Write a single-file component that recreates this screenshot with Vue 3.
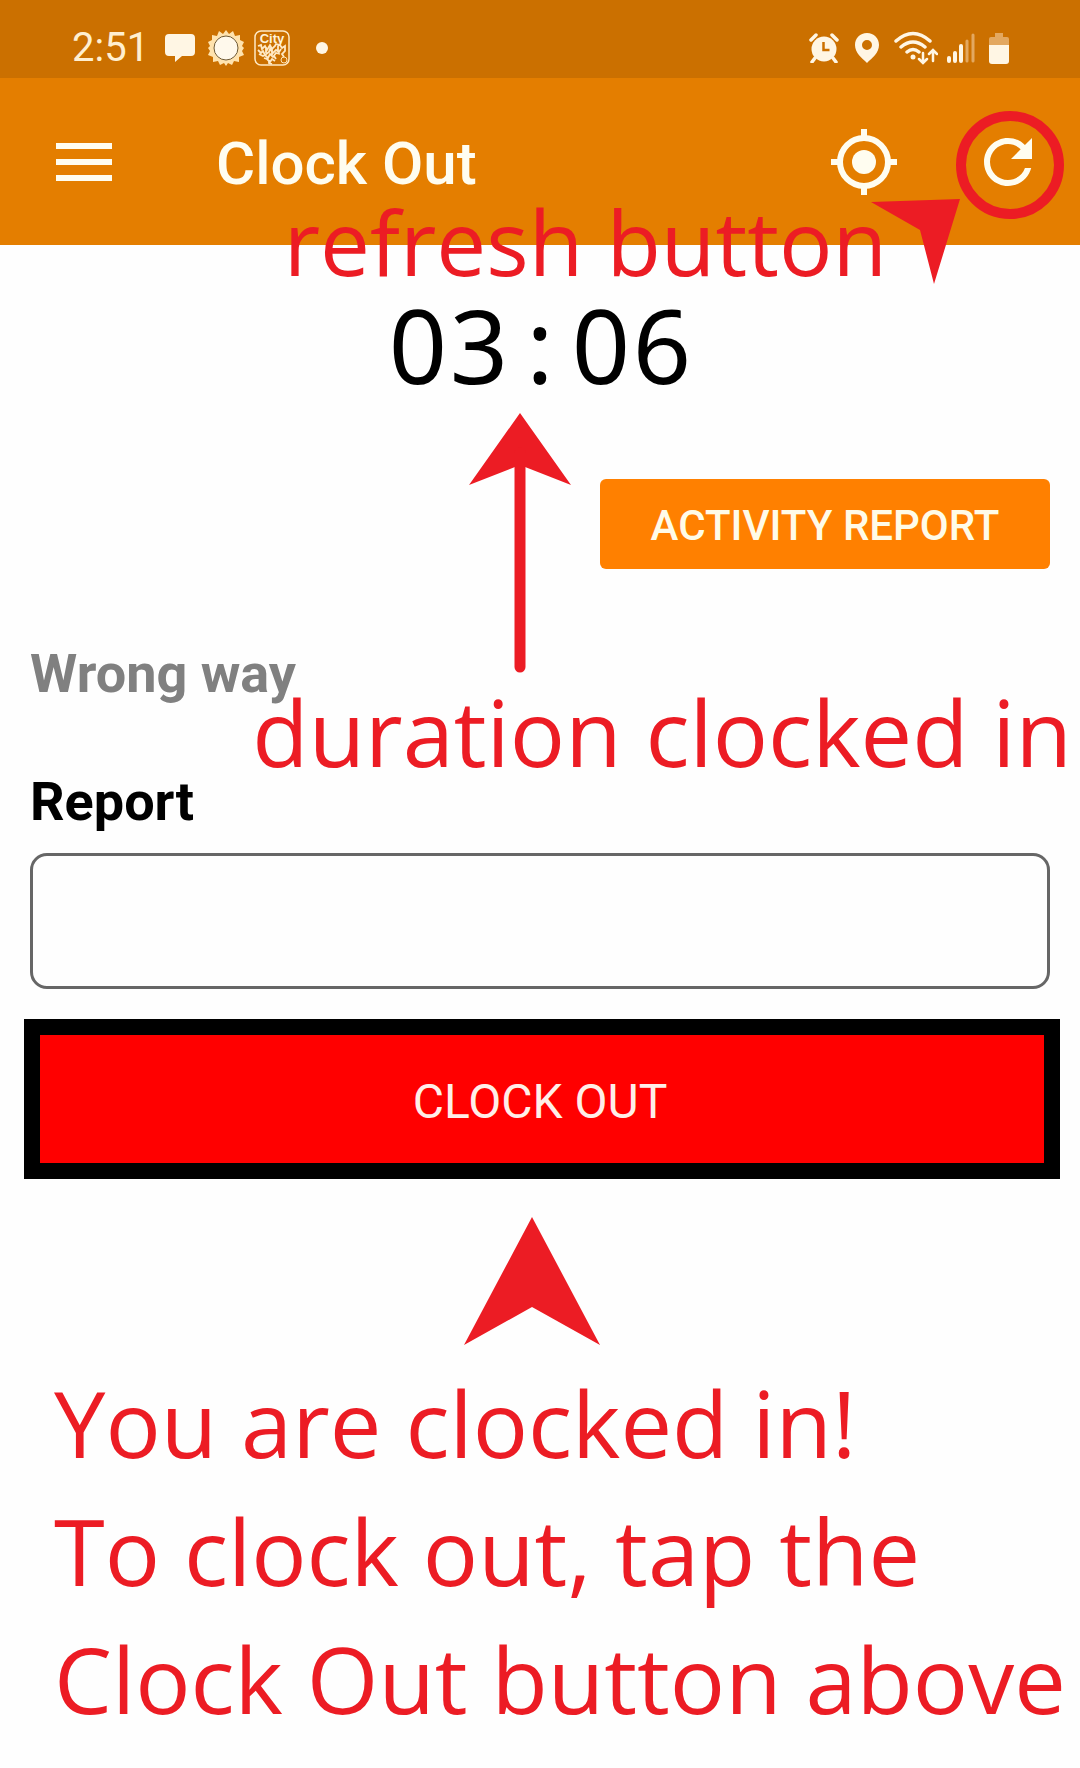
<script setup>
import { ref } from 'vue'

const report = ref('')
const elapsed = ref('03:06')
const instructions = [
  'You are clocked in!',
  'To clock out, tap the',
  'Clock Out button above',
]
</script>

<template>
  <div class="screen">
    <div class="status-bar">
      <div class="status-group">
        <span class="time">2:51</span>
        <svg width="30" height="30" viewBox="0 0 30 30">
          <path d="M4 1h22a4 4 0 0 1 4 4v14a4 4 0 0 1-4 4h-9l-7 6v-6H4a4 4 0 0 1-4-4V5a4 4 0 0 1 4-4z" fill="currentColor" />
        </svg>
        <svg class="sun" width="36" height="36" viewBox="0 0 36 36">
          <path d="M18 0l3 4 4-3 2 5 5-1v5l4 2-2 4 2 2-2 3 2 4-5 2v5l-5-1-2 4-4-2-2 3-2-3-4 2-2-4-5 1v-5l-5-2 2-4-2-3 2-2-2-4 4-2V5l5 1 2-5 4 3z" fill="#ffe3ae" />
          <circle cx="18" cy="18" r="12" fill="#fff9ec" stroke="#6f5a35" stroke-width="1" />
        </svg>
        <svg class="city" width="36" height="36" viewBox="0 0 36 36">
          <rect x="1" y="1" width="34" height="34" rx="6" fill="none" stroke="#ffe9c4" stroke-width="1.5" />
          <text x="18" y="13" text-anchor="middle" class="city-label">City</text>
          <path d="M4 16l3-1 1 4 3-3 2 4 3-5 2 4 3-3 1-2 4 1 2 3 3-2v5l-3 3 2 3M4 20l3 3 2-2 2 4 4-3 1-3 3 4 3-3 3 2 2-3M5 24l4 2 2-1 3 3 2-4 3 3 3-4 4 1M10 28l3 1 3 3 2-3 3 2M15 30v3l3 1M20 26l2 3M12 17v6M24 16v6M18 18v7" fill="none" stroke="#ffe9c4" stroke-width="1.8" />
          <circle cx="30" cy="30" r="3" fill="none" stroke="#ffe3b4" stroke-width="1" />
        </svg>
        <svg width="12" height="12" viewBox="0 0 12 12"><circle cx="6" cy="6" r="6" fill="currentColor" /></svg>
      </div>
      <div class="status-group">
        <svg width="30" height="30" viewBox="0 0 30 30">
          <circle cx="15" cy="16" r="12.5" fill="currentColor" />
          <path d="M2 7l5-5M28 7l-5-5M6 25l-3 4M24 25l3 4" stroke="currentColor" stroke-width="3.5" stroke-linecap="round" />
          <path d="M14.5 9v8h6" fill="none" stroke="#cb7000" stroke-width="2.5" />
        </svg>
        <svg class="pin" width="26" height="32" viewBox="0 0 26 32">
          <path fill-rule="evenodd" d="M13 1C6 1 1 6 1 13c0 8 7 13 12 18 5-5 12-10 12-18C25 6 20 1 13 1zm0 7a5 5 0 1 1 0 10 5 5 0 0 1 0-10z" fill="currentColor" />
        </svg>
        <svg class="wifi" width="44" height="34" viewBox="0 0 44 34">
          <g fill="none" stroke="currentColor" stroke-width="3.5" stroke-linecap="round">
            <path d="M2 10q17-15 34 0M7 16q12-10 24 0M13 21q6-5 12 0" />
            <path d="M29 22v9M25 28l4 4 4-4M39 30v-10M35 23l4-4 4 4" stroke-width="2.5" />
          </g>
          <circle cx="19" cy="26" r="2.5" fill="currentColor" />
        </svg>
        <svg class="signal" width="28" height="30" viewBox="0 0 28 30">
          <path d="M2 25v3M8 20v8M14 13v15" stroke="currentColor" stroke-width="4" stroke-linecap="round" />
          <path d="M20 8v20M26 2v26" stroke="#e3a860" stroke-width="3" stroke-linecap="round" />
        </svg>
        <svg class="battery" width="22" height="32" viewBox="0 0 22 32">
          <path d="M7 1h8v4h4a2 2 0 0 1 2 2v8H1V7a2 2 0 0 1 2-2h4z" fill="#e3a860" />
          <path d="M1 13h20v16a3 3 0 0 1-3 3H4a3 3 0 0 1-3-3z" fill="currentColor" />
        </svg>
      </div>
    </div>

    <header class="app-bar">
      <button class="icon-button" type="button" aria-label="Menu">
        <svg width="56" height="38" viewBox="0 0 56 38"><path d="M0 3h56M0 19h56M0 35h56" stroke="currentColor" stroke-width="6" /></svg>
      </button>
      <h1>Clock Out</h1>
      <button class="icon-button" type="button" aria-label="Locate">
        <svg width="72" height="72" viewBox="0 0 72 72">
          <circle cx="36" cy="36" r="12" fill="currentColor" />
          <circle cx="36" cy="36" r="24" fill="none" stroke="currentColor" stroke-width="6" />
          <path d="M36 3v8M36 61v8M3 36h8M61 36h8" stroke="currentColor" stroke-width="6" />
        </svg>
      </button>
      <button class="icon-button refresh" type="button" aria-label="Refresh">
        <svg width="72" height="72" viewBox="0 0 24 24">
          <path fill="currentColor" d="M17.65 6.35C16.2 4.9 14.21 4 12 4c-4.42 0-7.99 3.58-7.99 8s3.57 8 7.99 8c3.73 0 6.84-2.55 7.73-6h-2.08c-.82 2.33-3.04 4-5.65 4-3.31 0-6-2.69-6-6s2.690-6 6-6c1.66 0 3.14.69 4.22 1.78L13 11h7V4l-2.35 2.35z" />
        </svg>
      </button>
      <svg class="refresh-mark" width="194" height="176" viewBox="0 0 194 176">
        <circle cx="140" cy="54" r="49" fill="none" stroke="currentColor" stroke-width="10" />
        <path d="M1 91l89-3-26 85-14-54z" fill="currentColor" />
      </svg>
      <p class="note refresh-note">refresh button</p>
    </header>

    <main>
      <section class="timer">
        <div class="digits" role="timer">
          <span v-for="(char, i) in elapsed" :key="i">{{ char }}</span>
        </div>
        <svg class="timer-arrow" width="104" height="260" viewBox="0 0 104 260">
          <path d="M52 0l51 72-51-20-51 20z" fill="currentColor" />
          <path d="M52 40v214" stroke="currentColor" stroke-width="11" stroke-linecap="round" />
        </svg>
      </section>

      <div class="actions">
        <button class="activity" type="button">ACTIVITY REPORT</button>
      </div>

      <div class="task">
        <h2>Wrong way</h2>
        <p class="note duration-note">duration clocked in</p>
      </div>

      <label for="report">Report</label>
      <input id="report" v-model="report" type="text" />
      <button class="clock-out" type="button">CLOCK OUT</button>

      <svg class="pointer" width="136" height="128" viewBox="0 0 136 128">
        <path d="M68 0l68 128-68-38-68 38z" fill="currentColor" />
      </svg>
      <div class="instructions">
        <p v-for="line in instructions" :key="line">{{ line }}</p>
      </div>
    </main>
  </div>
</template>

<style>
body {
  margin: 0;
  background: #fefefe;
}
</style>

<style scoped>
.screen {
  min-height: 100vh;
  overflow: hidden;
  background: #fefefe;
  color: #000;
  font-family: Roboto, "Liberation Sans", sans-serif;
}

h1, h2, p {
  margin: 0;
}

svg {
  display: block;
  flex: none;
}

button {
  border: 0;
  padding: 0;
  font-family: inherit;
  cursor: pointer;
}

.status-bar {
  display: flex;
  justify-content: space-between;
  height: 78px;
  padding: 16px 70px 0 72px;
  box-sizing: border-box;
  background: #cb7000;
  color: #fff6e4;
}

.status-group {
  display: flex;
  align-items: center;
  height: 64px;
}

.time {
  width: 93px;
  font-size: 40px;
  line-height: 48px;
  color: #ffefd0;
}

.sun { margin-left: 13px; }
.city { margin: 0 26px 0 10px; }

.city-label {
  font: bold 13px "Liberation Sans", sans-serif;
  fill: #fff3da;
}

.pin { margin-left: 15px; }
.wifi { margin-left: 14px; }
.signal { margin-left: 9px; }
.battery { margin-left: 13px; }

.app-bar {
  position: relative;
  display: flex;
  align-items: center;
  height: 167px;
  padding: 0 36px 0 56px;
  box-sizing: border-box;
  background: #e47e00;
  color: #fffdf0;
}

.icon-button {
  display: flex;
  background: none;
  color: inherit;
}

.refresh {
  margin-left: 72px;
}

h1 {
  flex: 1;
  margin-left: 104px;
  padding-top: 4px;
  font-size: 60px;
  line-height: 72px;
  font-weight: 500;
}

.refresh-mark {
  position: absolute;
  top: 33px;
  right: 16px;
  color: #ec1c24;
  pointer-events: none;
}

.note,
.instructions {
  color: #ec1c24;
  font-family: "Open Sans", "Noto Sans", sans-serif;
  font-size: 92px;
  white-space: nowrap;
}

.note {
  position: absolute;
  line-height: 96px;
}

.refresh-note {
  top: 116px;
  right: 193px;
  font-size: 89px;
}

main {
  display: flex;
  flex-direction: column;
  padding: 0 30px;
}

.timer {
  position: relative;
  display: flex;
  justify-content: center;
  padding-top: 40px;
}

.digits {
  display: grid;
  grid-template-columns: repeat(5, 61px);
  font-family: "Noto Sans", "Open Sans", sans-serif;
  font-size: 102px;
  line-height: 120px;
  text-align: center;
}

.timer-arrow {
  position: absolute;
  top: 168px;
  left: calc(50% - 72px);
  color: #ec1c24;
}

.actions {
  display: flex;
  justify-content: flex-end;
  margin-top: 74px;
}

.activity {
  width: 450px;
  height: 90px;
  padding-top: 2px;
  border-radius: 6px;
  background: #ff8000;
  color: #fffbe8;
  font-size: 42px;
  font-weight: 500;
}

.task {
  position: relative;
  margin-top: 73px;
}

h2,
label {
  font-size: 54px;
  line-height: 64px;
  font-weight: 700;
}

h2 {
  color: #808080;
}

.duration-note {
  top: 42px;
  right: -22px;
}

label {
  margin-top: 64px;
}

input {
  height: 136px;
  margin-top: 19px;
  padding: 0 24px;
  box-sizing: border-box;
  border: 3px solid #666;
  border-radius: 17px;
  background: #fefefe;
  font: 48px Roboto, sans-serif;
}

.clock-out {
  height: 160px;
  margin: 30px -10px 0 -6px;
  padding: 4px 4px 0 0;
  border: 16px solid #000;
  background: #f00;
  color: #ffeee8;
  font-size: 48px;
}

.pointer {
  margin: 38px 0 0 434px;
  color: #ec1c24;
}

.instructions {
  margin: 14px -30px 0 24px;
  line-height: 128px;
}
</style>
